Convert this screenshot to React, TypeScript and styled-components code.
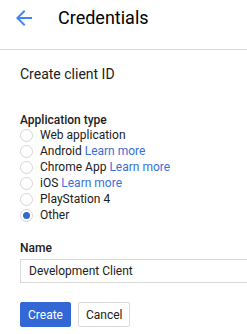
import styled, { createGlobalStyle } from 'styled-components';

const GlobalStyle = createGlobalStyle`
  html, body {
    margin: 0;
    padding: 0;
    background: #fff;
  }
  body {
    font-family: Roboto, "Liberation Sans", Arial, sans-serif;
    color: #212121;
    overflow: hidden;
  }
`;

const Header = styled.header`
  height: 50px;
  display: flex;
  align-items: center;
  border-bottom: 1px solid #dadada;
  box-sizing: border-box;
  padding-left: 12px;
`;

const BackButton = styled.button`
  border: none;
  background: none;
  padding: 0;
  width: 24px;
  height: 24px;
  display: flex;
  align-items: center;
  justify-content: center;
  margin-top: -14px;
  cursor: pointer;
`;

const Title = styled.h1`
  margin: -14px 0 0 22px;
  font-size: 18px;
  font-weight: 400;
  color: #000;
`;

const Content = styled.main`
  padding: 15px 0 0 20px;
`;

const Heading = styled.h2`
  margin: 0;
  font-size: 14px;
  font-weight: 400;
  line-height: 18px;
  color: #212121;
`;

const Label = styled.div`
  font-size: 12px;
  font-weight: 500;
  line-height: 14px;
  color: #212121;
`;

const Fieldset = styled.div`
  margin-top: 30px;
  display: flex;
  flex-direction: column;
`;

const Option = styled.label`
  display: flex;
  align-items: center;
  height: 16px;
  font-size: 12px;
  color: #212121;
  gap: 7px;
`;

const Radio = styled.span<{ checked?: boolean }>`
  width: 13px;
  height: 13px;
  border-radius: 50%;
  border: 1px solid #d6d6d6;
  box-sizing: border-box;
  background: #fff;
  display: flex;
  align-items: center;
  justify-content: center;
  flex-shrink: 0;
  margin-top: 1px;

  &::after {
    content: '';
    width: 7px;
    height: 7px;
    border-radius: 50%;
    background: ${(p) => (p.checked ? '#3367d6' : 'transparent')};
  }
`;

const Link = styled.a`
  color: #3b6fd9;
  text-decoration: none;
`;

const NameField = styled.div`
  margin-top: 18px;
`;

const Input = styled.input`
  display: block;
  margin-top: 4px;
  width: 227px;
  height: 24px;
  box-sizing: border-box;
  border: 1px solid #d9d9d9;
  border-right: none;
  padding: 0 8px;
  font-family: inherit;
  font-size: 12px;
  color: #212121;
  outline: none;
`;

const Actions = styled.div`
  margin-top: 19px;
  display: flex;
  gap: 7px;
`;

const Button = styled.button<{ primary?: boolean }>`
  height: 25px;
  padding: 0 7px;
  font-family: inherit;
  font-size: 12px;
  border-radius: 2px;
  box-sizing: border-box;
  cursor: pointer;
  border: 1px solid ${(p) => (p.primary ? '#3367d6' : '#d9d9d9')};
  background: ${(p) => (p.primary ? '#3367d6' : '#fff')};
  color: ${(p) => (p.primary ? '#fff' : '#212121')};
`;

const options = [
  { label: 'Web application' },
  { label: 'Android', link: true },
  { label: 'Chrome App', link: true },
  { label: 'iOS', link: true },
  { label: 'PlayStation 4' },
  { label: 'Other', checked: true },
];

const App = () => (
  <>
    <GlobalStyle />
    <Header>
      <BackButton aria-label="Back">
        <svg width="24" height="24" viewBox="0 0 24 24">
          <path d="M20 11H7.83l5.59-5.59L12 4l-8 8 8 8 1.41-1.41L7.83 13H20v-2z" fill="#4285f4" />
        </svg>
      </BackButton>
      <Title>Credentials</Title>
    </Header>
    <Content>
      <Heading>Create client ID</Heading>
      <Fieldset>
        <Label>Application type</Label>
        {options.map((o) => (
          <Option key={o.label}>
            <Radio checked={o.checked} />
            <span>
              {o.label}
              {o.link && (
                <>
                  {' '}
                  <Link href="#">Learn more</Link>
                </>
              )}
            </span>
          </Option>
        ))}
      </Fieldset>
      <NameField>
        <Label>Name</Label>
        <Input defaultValue="Development Client" />
      </NameField>
      <Actions>
        <Button primary>Create</Button>
        <Button>Cancel</Button>
      </Actions>
    </Content>
  </>
);

export default App;
